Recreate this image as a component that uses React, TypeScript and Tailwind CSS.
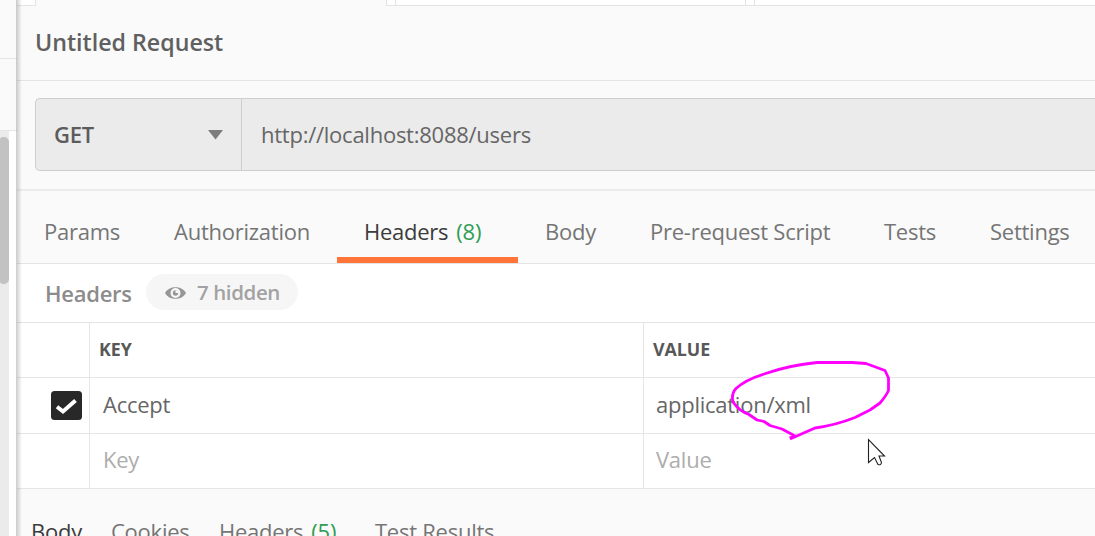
import React from "react";

function Tab({ label, count, active, className }: { label: string; count?: number; active?: boolean; className: string }) {
  return (
    <div className={`shrink-0 whitespace-nowrap ${active ? "text-[#3c3c3c]" : "text-[#757575]"} ${className}`}>
      {label}
      {count !== undefined && <span className="ml-2 text-[#2f9e54]">({count})</span>}
    </div>
  );
}

function Sidebar() {
  return (
    <aside className="flex w-[17px] shrink-0 flex-col bg-[#fafafa]">
      <div className="h-[59px] shrink-0 border-b border-[#e6e6e6]" />
      <div className="h-[72px] shrink-0 border-b border-[#e6e6e6]" />
      <div className="flex-1 bg-white">
        <div className="h-full w-[9px] bg-[#ebebeb] pt-[6px]">
          <div className="h-[147px] rounded-r-[5px] rounded-l-[3px] bg-[#c2c2c2]" />
        </div>
      </div>
    </aside>
  );
}

function TabStrip() {
  return (
    <div className="flex h-[6px] shrink-0">
      <div className="w-[19px] border-r border-b border-[#e4e4e4] bg-white" />
      <div className="w-[350px]" />
      <div className="w-[9px] border-b border-l border-[#e4e4e4] bg-white" />
      <div className="w-[351px] border-x border-b border-[#e4e4e4] bg-white" />
      <div className="w-[8px] border-b border-[#e4e4e4] bg-white" />
      <div className="flex-1 border-b border-l border-[#e4e4e4] bg-white" />
    </div>
  );
}

function RequestBar() {
  return (
    <div className="flex h-[110px] shrink-0 border-b-2 border-[#ececec] pt-[17px] pl-[18px]">
      <div className="flex h-[73px] flex-1 rounded-l-[5px] border border-r-0 border-[#cecece] bg-[#ebebeb]">
        <div className="flex w-[206px] items-center justify-between border-r border-[#cecece] px-[18px] text-[#5c5c5c]">
          <span className="pb-px font-semibold">GET</span>
          <svg width="15" height="10" viewBox="0 0 15 10" fill="#7c7c7c"><path d="M0 0h15L7.5 9.5z" /></svg>
        </div>
        <div className="flex items-center pb-px pl-[19px] text-[#666]">http://localhost:8088/users</div>
      </div>
    </div>
  );
}

function Row({ check, name, value, className }: { check?: boolean; name: string; value: string; className: string }) {
  return (
    <div className={`flex shrink-0 border-b border-[#e6e6e6] bg-white ${className}`}>
      <div className="flex w-[73px] items-center border-r border-[#e6e6e6] pl-[34px]">
        {check && (
          <svg width="31" height="29" viewBox="0 0 31 29">
            <rect width="31" height="29" rx="3.5" fill="#282828" />
            <path d="M6 15.700 12 20.500 24.500 9.500" fill="none" stroke="#fff" strokeWidth="4" strokeLinejoin="miter" />
          </svg>
        )}
      </div>
      <div className="flex w-[554px] items-center border-r border-[#e6e6e6] pb-[4px] pl-[13px]">{name}</div>
      <div className="flex items-center pb-[4px] pl-[12px]">{value}</div>
    </div>
  );
}

export default function App() {
  return (
    <div className="relative flex h-[536px] w-[1095px] overflow-hidden bg-[#fafafa] font-['Open_Sans',sans-serif] text-[22px] leading-[30px] tracking-[-0.25px]">
      <Sidebar />
      <main className="flex min-w-0 flex-1 flex-col">
        <TabStrip />
        <div className="flex h-[75px] shrink-0 items-center border-b border-[#e4e4e4] pb-[3px] pl-[18px] text-[23.2px] font-semibold tracking-normal text-[#606060]">Untitled Request</div>
        <RequestBar />
        <nav className="flex h-[73px] shrink-0 border-b border-[#e4e4e4]">
          <Tab label="Params" className="w-[130px] pt-[25px] pl-[27px]" />
          <Tab label="Authorization" className="w-[190px] pt-[25px] pl-[27px]" />
          <Tab label="Headers" count={8} active className="h-[72px] w-[181px] border-b-[6px] border-[#ff7539] pt-[25px] pl-[27px]" />
          <Tab label="Body" className="w-[105px] pt-[25px] pl-[27px]" />
          <Tab label="Pre-request Script" className="w-[235px] pt-[25px] pl-[27px]" />
          <Tab label="Tests" className="w-[105px] pt-[25px] pl-[26px]" />
          <Tab label="Settings" className="pt-[25px] pl-[27px]" />
        </nav>
        <div className="flex h-[59px] shrink-0 border-b border-[#e4e4e4] bg-white pt-[10px] pl-[28px] font-semibold">
          <div className="w-[101px] pt-[4px] text-[#8c8c8c]">Headers</div>
          <div className="flex h-[36px] w-[152px] items-center rounded-full bg-[#f6f6f6] pl-[18px] text-[20.5px] tracking-[-0.4px] text-[#a2a2a2]">
            <svg width="23" height="14" viewBox="0 0 23 14" className="mt-[2px]">
              <path d="M1 7C5-.8 18-.8 22 7C18 14.8 5 14.8 1 7Z" fill="#969696" />
              <circle cx="11.500" cy="7" r="5" fill="#f6f6f6" />
              <circle cx="11.500" cy="7" r="2.700" fill="#969696" />
              <path d="M11.500 4.300h3v2.700h-3z" fill="#f6f6f6" />
            </svg>
            <span className="ml-[10px] whitespace-nowrap">7 hidden</span>
          </div>
        </div>
        <div className="flex h-[55px] shrink-0 border-b border-[#e6e6e6] bg-white text-[17.8px] font-bold tracking-normal text-[#585858]">
          <div className="w-[73px] border-r border-[#e6e6e6]" />
          <div className="flex w-[554px] items-center border-r border-[#e6e6e6] pb-[2px] pl-[9px]">KEY</div>
          <div className="flex items-center pb-[2px] pl-[9px]">VALUE</div>
        </div>
        <Row check name="Accept" value="application/xml" className="h-[56px] text-[#666]" />
        <Row name="Key" value="Value" className="h-[55px] text-[#adadad]" />
        <div className="flex h-[48px] shrink-0 pt-[27px] pl-[14px]">
          <Tab label="Body" active className="w-[80px]" />
          <Tab label="Cookies" className="w-[108px]" />
          <Tab label="Headers" count={5} className="w-[156px]" />
          <Tab label="Test Results" className="" />
        </div>
      </main>
      <div className="absolute top-0 left-[16px] h-full w-[6px] bg-linear-to-r from-black/20 to-transparent" />
      <svg className="absolute top-[355px] left-[725px]" width="175" height="115" viewBox="725 355 175 115" fill="none">
        <path d="M789.500 438 L795 436 782 429 770 425.500 764 421.500 757 420 749 414.500 Q739 411 733 402 Q731 394 736 388.500 Q745 380 764 374 Q790 365 817 362.500 H852 L866 363.500 885 370.500 888.500 378 V390.500 Q886 396 880 403 L870 410 855 417.500 Q836 425 815 428 L790 439" stroke="#ff00ff" strokeWidth="2.800" strokeLinejoin="round" />
        <path d="M868.500 439.500 V462.500 L874.500 457.500 878 464.500 Q881 465.500 881.500 462.500 L879 456 H884.500Z" fill="#fff" stroke="#222" strokeWidth="1.100" />
      </svg>
    </div>
  );
}
